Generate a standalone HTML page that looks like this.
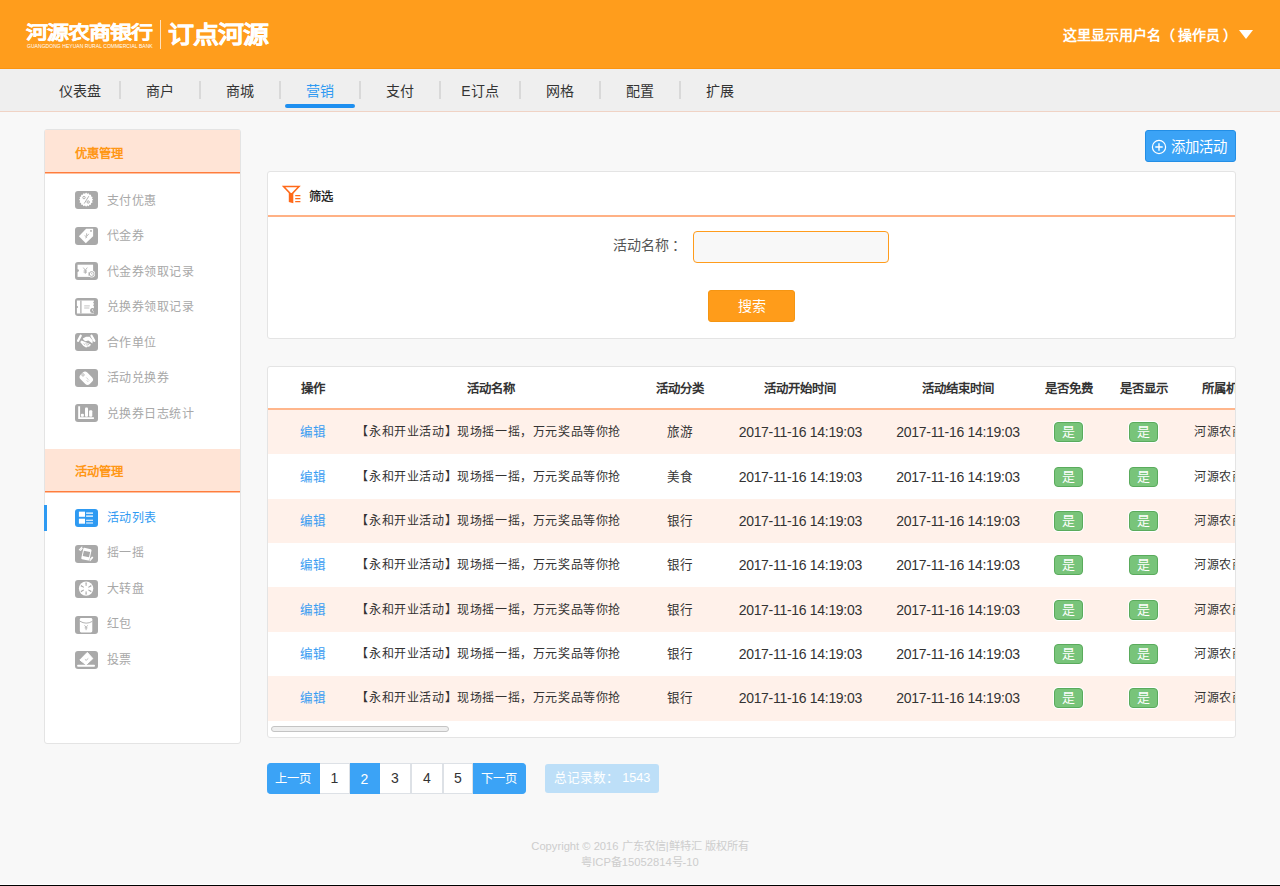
<!DOCTYPE html>
<html lang="zh-CN"><head><meta charset="utf-8">
<style>
*{margin:0;padding:0;box-sizing:border-box}
html,body{width:1280px;height:886px;overflow:hidden}
body{position:relative;background:#f8f8f8;font-family:"Liberation Sans",sans-serif;color:#333;font-size:13px}
.abs{position:absolute}
#hdr{left:0;top:0;width:1280px;height:69px;background:#ff9d1c;border-bottom:1px solid #fb9410}
.logo1{left:26px;top:20px;font-size:22px;font-weight:900;color:#fff;letter-spacing:-1px;white-space:nowrap;line-height:30px;transform:scale(1,0.85);transform-origin:0 0;-webkit-text-stroke:0.4px #fff}
.logo-sub{left:27px;top:43px;font-size:5px;color:#fff;white-space:nowrap;letter-spacing:0.05px;line-height:6px}
.logo-div{left:160px;top:20px;width:1px;height:29px;background:#ffe2bd}
.logo2{left:168px;top:19px;font-size:26px;font-weight:900;color:#fff;white-space:nowrap;line-height:34px;letter-spacing:-1px;transform:scale(1,0.915);transform-origin:0 0;-webkit-text-stroke:0.4px #fff}
.user{left:1063px;top:25px;font-size:14px;font-weight:bold;color:#fff;white-space:nowrap;line-height:20px}
.tri{left:1239px;top:30px;width:0;height:0;border-left:7.5px solid transparent;border-right:7.5px solid transparent;border-top:9px solid #fff}
#nav{left:0;top:69px;width:1280px;height:43px;background:#efefef;border-bottom:1px solid #f0d3c5}
.ni{top:1px;width:80px;height:42px;line-height:42px;text-align:center;font-size:14px;color:#333}
.ns{top:12px;width:2px;height:18px;background:#d9d9d9}
.nact{color:#2e9af2}
.nbar{left:285px;top:35px;width:70px;height:4px;border-radius:2px;background:#1e8ff0}

.panel{background:#fff;border:1px solid #e4e4e4;border-radius:3px}
#side{left:44px;top:129px;width:197px;height:615px}
.sh{left:45px;width:195px;height:44px;background:#ffe4d6;border-bottom:1px solid #ffc0a0;box-shadow:inset 0 -1px 0 #ff7d3c}
.sht{left:75px;font-size:12.3px;font-weight:bold;color:#ff9716;line-height:20px;white-space:nowrap}
.si{left:75px;width:23px;height:18px;border-radius:3px;background:#a9a9a9}
.sit{left:107px;font-size:12px;letter-spacing:0.45px;color:#a8a8a8;line-height:20px;white-space:nowrap}
.si svg{position:absolute;left:0;top:0}

#filter{left:267px;top:171px;width:969px;height:168px}
.fline{left:268px;top:215px;width:967px;height:2px;background:#ffb185}
.ftitle{left:309px;top:187px;font-size:12.3px;color:#111;line-height:20px;font-weight:normal;-webkit-text-stroke:0.25px #111}
.flab{left:613px;top:235px;font-size:14px;color:#555;line-height:20px;white-space:nowrap}
.finp{left:693px;top:231px;width:196px;height:32px;border:1px solid #ff9c1c;border-radius:4px;background:#f8f8f8}
.fbtn{left:708px;top:290px;width:87px;height:32px;border-radius:3px;background:#ff9c1a;border:1px solid #f59512;color:#fff;font-size:14px;line-height:30px;text-align:center}
.addbtn{left:1145px;top:130px;width:91px;height:32px;border-radius:3px;background:#3ba3f6;border:1px solid #238ee5;color:#fff;font-size:14.4px;line-height:30px;white-space:nowrap}

#tbl{left:267px;top:366px;width:969px;height:372px;overflow:hidden}
.th{font-size:12.4px;font-weight:bold;color:#333;line-height:20px;white-space:nowrap;text-align:center;width:300px}
.hline{left:268px;top:408px;width:967px;height:2px;background:#ffb68c}
.row{left:268px;width:967px;height:44.4px}
.odd{background:#fff1ea}
.dt{font-size:14px;letter-spacing:-0.3px}
.td{font-size:12.55px;color:#333;line-height:20px;white-space:nowrap;text-align:center;width:300px}
.edit{color:#3a9df2}
.badge{width:29px;height:20px;border-radius:4px;background:#78c47a;border:1px solid #5aab5c;color:#fff;font-size:13px;line-height:18px;text-align:center;box-shadow:0 0 0 1px #fff}
.clip{left:268px;top:366px;width:967px;height:370px;overflow:hidden}
.sbar{left:271px;top:726px;width:178px;height:5px;border-radius:3px;background:#ececec;border:1px solid #c8c8c8}

.pg{top:763px;height:31px;line-height:28px;text-align:center;font-size:14px;color:#333;background:#fff;border:1px solid #dde1e6;border-left:none}
.pgb{background:#3ba3f6;color:#fff;border-color:#3ba3f6;font-size:12.3px;line-height:31px}
.total{left:545px;top:764px;width:114px;height:29px;border-radius:3px;background:#bddff8;color:#fff;font-size:12.7px;line-height:29px;text-align:center;white-space:nowrap}
.foot{left:340px;width:600px;text-align:center;font-size:11.2px;color:#cdcdcd;line-height:16px;white-space:nowrap}
.bline1{left:0;top:884px;width:1280px;height:1px;background:#fff}
.bline2{left:0;top:885px;width:1280px;height:1px;background:#000}
</style></head><body>
<div id="hdr" class="abs"></div>
<div class="abs logo1">河源农商银行</div>
<div class="abs logo-sub">GUANGDONG HEYUAN RURAL COMMERCIAL BANK</div>
<div class="abs logo-div"></div>
<div class="abs logo2">订点河源</div>
<div class="abs user">这里显示用户名<span style="margin-right:3px">（</span>操作员<span style="margin-left:3px">）</span></div>
<div class="abs tri"></div>

<div id="nav" class="abs">
  <div class="abs ni" style="left:40px">仪表盘</div><div class="abs ns" style="left:119px"></div>
  <div class="abs ni" style="left:120px">商户</div><div class="abs ns" style="left:199px"></div>
  <div class="abs ni" style="left:200px">商城</div><div class="abs ns" style="left:279px"></div>
  <div class="abs ni nact" style="left:280px">营销</div><div class="abs ns" style="left:359px"></div>
  <div class="abs ni" style="left:360px">支付</div><div class="abs ns" style="left:439px"></div>
  <div class="abs ni" style="left:440px">E订点</div><div class="abs ns" style="left:519px"></div>
  <div class="abs ni" style="left:520px">网格</div><div class="abs ns" style="left:599px"></div>
  <div class="abs ni" style="left:600px">配置</div><div class="abs ns" style="left:679px"></div>
  <div class="abs ni" style="left:680px">扩展</div>
  <div class="abs nbar"></div>
</div>

<!-- sidebar -->
<div id="side" class="abs panel"></div>
<div class="abs sh" style="top:130px"></div>
<div class="abs sht" style="top:143.5px">优惠管理</div>
<div class="abs sh" style="top:449px"></div>
<div class="abs sht" style="top:462px">活动管理</div>

<div class="abs si" style="top:191.00px"><svg width="23" height="18" viewBox="0 0 23 18"><path d="M11.1 1.6l1.15 1.2 1.55-.65.6 1.55 1.65.05.05 1.65 1.55.6-.65 1.55 1.2 1.15-1.2 1.15.65 1.55-1.55.6-.05 1.65-1.65.05-.6 1.55-1.55-.65-1.15 1.2-1.15-1.2-1.55.65-.6-1.55-1.65-.05-.05-1.65-1.55-.6.65-1.55-1.2-1.15 1.2-1.15-.65-1.55 1.55-.6.05-1.65 1.65-.05.6-1.55 1.55.65z" fill="#fff"/><circle cx="9" cy="6.6" r="1.2" fill="none" stroke="#a9a9a9" stroke-width=".9"/><circle cx="13.2" cy="11" r="1.2" fill="none" stroke="#a9a9a9" stroke-width=".9"/><path d="M13.8 5.2l-4.6 7.4" stroke="#a9a9a9" stroke-width=".9"/></svg></div><div class="abs sit" style="top:190.60px">支付优惠</div>
<div class="abs si" style="top:226.55px"><svg width="23" height="18" viewBox="0 0 23 18"><path d="M3.9 9.2L11.1 1.65H18.1V9.2L10.8 16.3z" fill="#fff"/><circle cx="16" cy="3.9" r="0.9" fill="#a9a9a9"/><path d="M11.6 6.3v2.6M9.6 8.7l2.3 1.2M13.8 6.9l-1.9 2.2M10.3 11l1.8-1" stroke="#a9a9a9" stroke-width=".8"/></svg></div><div class="abs sit" style="top:226.15px">代金券</div>
<div class="abs si" style="top:262.10px"><svg width="23" height="18" viewBox="0 0 23 18"><path d="M2.55 2.7H18.1V14.9H2.55z" fill="#fff"/><circle cx="2.6" cy="8.6" r="1.3" fill="#a9a9a9"/><path d="M8.3 5.6l2 2.6 2-2.6M10.3 8.2v3.6M8.6 8.9h3.4M8.6 10.2h3.4" stroke="#a9a9a9" stroke-width=".8" fill="none"/><circle cx="16.7" cy="12" r="3.4" fill="#fff"/><circle cx="16.7" cy="12" r="2.4" fill="none" stroke="#a9a9a9" stroke-width=".9"/><path d="M16.7 10.8v1.3l.9.8M13.9 10.2v3.6" stroke="#a9a9a9" stroke-width=".7" fill="none"/></svg></div><div class="abs sit" style="top:261.70px">代金券领取记录</div>
<div class="abs si" style="top:297.65px"><svg width="23" height="18" viewBox="0 0 23 18"><path d="M1.9 2.5H18.9V15.5H1.9z" fill="#fff"/><circle cx="2" cy="9" r="1.1" fill="#a9a9a9"/><path d="M5.9 2.5V15.5" stroke="#a9a9a9" stroke-width="1.2"/><path d="M9.2 7.9h5.6M9.2 10h5.2" stroke="#a9a9a9" stroke-width=".7"/><circle cx="19" cy="4.6" r=".8" fill="#a9a9a9"/><circle cx="19" cy="7.3" r=".8" fill="#a9a9a9"/><circle cx="17.6" cy="12.6" r="2.5" fill="#a9a9a9"/><path d="M17.6 11.2v1.5l1 .8" stroke="#fff" stroke-width=".7" fill="none"/></svg></div><div class="abs sit" style="top:297.25px">兑换券领取记录</div>
<div class="abs si" style="top:333.20px"><svg width="23" height="18" viewBox="0 0 23 18"><path d="M5.7 2.8L3.1 7.7M16.5 2.8L19.3 7.7" stroke="#fff" stroke-width="2.3" stroke-linecap="round"/><path d="M7.8 5.4L11 3.7 14.6 3.8 17.8 7.4 17.4 10.4 13.4 7.4 10.4 8.2 8.6 7z" fill="#fff"/><path d="M5.2 8.9L6.6 7.4 16 11.4 14.8 13.2 11 14.4 8.2 12.8z" fill="#fff"/><path d="M8.6 10.6l1.6 1.2M10.4 10.2l2 1.4M12.4 10.8l1.8 1.2M11.6 12.4l1.2.8" stroke="#a9a9a9" stroke-width=".7"/></svg></div><div class="abs sit" style="top:332.80px">合作单位</div>
<div class="abs si" style="top:368.75px"><svg width="23" height="18" viewBox="0 0 23 18"><rect x="6.55" y="2.7" width="9.5" height="13" rx="3.2" fill="#fff" transform="rotate(-45 11.3 9.2)"/><circle cx="8" cy="5.9" r="1.2" fill="none" stroke="#a9a9a9" stroke-width=".8"/><path d="M11.4 8.6l1.2 1.2M13 10.4l1 1M11.8 11.4l1.4 1.4" stroke="#a9a9a9" stroke-width=".7"/></svg></div><div class="abs sit" style="top:368.35px">活动兑换券</div>
<div class="abs si" style="top:404.30px"><svg width="23" height="18" viewBox="0 0 23 18"><path d="M3.2 2.3h1.9v11h13.8v1.6H3.2z" fill="#fff"/><rect x="5.9" y="9.8" width="3" height="3" rx="1" fill="#fff"/><rect x="10" y="3.5" width="3" height="9.3" rx="1" fill="#fff"/><rect x="14.1" y="6.3" width="3.2" height="6.5" rx="1" fill="#fff"/></svg></div><div class="abs sit" style="top:403.90px">兑换券日志统计</div>
<div class="abs" style="left:44px;top:505.0px;width:3px;height:26px;background:#2e9af2"></div>
<div class="abs si" style="top:509.00px;background:#2e9af2"><svg width="23" height="18" viewBox="0 0 23 18"><rect x="3.9" y="2.65" width="6.1" height="5.15" fill="#fff"/><rect x="3.9" y="9.7" width="6.1" height="5" fill="#fff"/><path d="M11.1 4.1H18M11.1 7.1H18M11.1 11.2H18M11.1 14H18" stroke="#fff" stroke-width="1.1"/></svg></div><div class="abs sit" style="top:507.60px;color:#2e9af2">活动列表</div>
<div class="abs si" style="top:544.55px"><svg width="23" height="18" viewBox="0 0 23 18"><g transform="rotate(12 11.4 9.2)"><rect x="7.2" y="3.4" width="8.4" height="11.6" rx="1" fill="#fff"/><rect x="8.2" y="6.3" width="6.4" height="5.4" fill="#a9a9a9"/></g><path d="M4.3 4.9l2.6-2.9M5.6 5.3l1.6-1.9M15 15.6l2.7-2.9M15.6 13.8l1.6-1.7" stroke="#fff" stroke-width="1.1" stroke-linecap="round"/></svg></div><div class="abs sit" style="top:543.15px">摇一摇</div>
<div class="abs si" style="top:580.10px"><svg width="23" height="18" viewBox="0 0 23 18"><circle cx="11.1" cy="8.6" r="7.2" fill="#fff"/><g fill="#a9a9a9"><path d="M10.4 2.6h1.4l-.3 3.4h-.8z"/><path d="M10.4 2.6h1.4l-.3 3.4h-.8z" transform="rotate(60 11.1 8.6)"/><path d="M10.4 2.6h1.4l-.3 3.4h-.8z" transform="rotate(120 11.1 8.6)"/><path d="M10.4 2.6h1.4l-.3 3.4h-.8z" transform="rotate(180 11.1 8.6)"/><path d="M10.4 2.6h1.4l-.3 3.4h-.8z" transform="rotate(240 11.1 8.6)"/><path d="M10.4 2.6h1.4l-.3 3.4h-.8z" transform="rotate(300 11.1 8.6)"/></g></svg></div><div class="abs sit" style="top:578.70px">大转盘</div>
<div class="abs si" style="top:615.65px"><svg width="23" height="18" viewBox="0 0 23 18"><rect x="4.85" y="1.9" width="12.45" height="14.6" rx="1.4" fill="#fff"/><path d="M4.9 5.2q6.2 3.8 12.4 .2" stroke="#a9a9a9" stroke-width=".9" fill="none"/><path d="M9.5 9.3l1.6 2 1.6-2M11.1 11.3v2.9M9.7 11.9h2.8" stroke="#a9a9a9" stroke-width=".8" fill="none"/></svg></div><div class="abs sit" style="top:614.25px">红包</div>
<div class="abs si" style="top:651.20px"><svg width="23" height="18" viewBox="0 0 23 18"><path d="M12.3 1.4L17.85 7.6 11.1 13.8 4.85 9z" fill="#fff" stroke="#fff" stroke-width="1" stroke-linejoin="round"/><path d="M9.9 8.3l1.2 1.1 2.2-2" stroke="#a9a9a9" stroke-width=".8" fill="none"/><rect x="2.1" y="13.8" width="17.9" height="1.9" rx=".9" fill="#fff"/></svg></div><div class="abs sit" style="top:649.80px">投票</div>

<!-- filter -->
<div class="abs addbtn"><svg class="abs" style="left:5px;top:8px" width="16" height="16" viewBox="0 0 16 16"><circle cx="8" cy="8" r="6.6" fill="none" stroke="#fff" stroke-width="1.2"/><path d="M8 4.3v7.4M4.3 8h7.4" stroke="#fff" stroke-width="1.4"/></svg><span class="abs" style="left:25px;top:1px">添加活动</span></div>
<div id="filter" class="abs panel"></div>
<div class="abs fline"></div>
<svg class="abs" style="left:282px;top:185px" width="20" height="20" viewBox="0 0 20 20"><path d="M1.6 1.5H17L9.3 9.6z" fill="none" stroke="#ff6a1a" stroke-width="1.5" stroke-linejoin="miter"/><path d="M6.8 8h4.5v10.2l-4.5-1.3z" fill="#ff6a1a"/><path d="M13.2 10.6h5.2M13.2 13.6h5.2M13.2 16.6h5.2" stroke="#ff6a1a" stroke-width="1.1"/></svg>
<div class="abs ftitle">筛选</div>
<div class="abs flab">活动名称<span class="abs" style="left:59px;top:0">：</span></div>
<div class="abs finp"></div>
<div class="abs fbtn">搜索</div>

<!-- table -->
<div id="tbl" class="abs panel"></div>
<div class="abs clip" id="clip"><div class="abs th" style="left:-105.2px;top:12.5px">操作</div>
<div class="abs th" style="left:73.0px;top:12.5px">活动名称</div>
<div class="abs th" style="left:261.5px;top:12.5px">活动分类</div>
<div class="abs th" style="left:382.3px;top:12.5px">活动开始时间</div>
<div class="abs th" style="left:540.0px;top:12.5px">活动结束时间</div>
<div class="abs th" style="left:651.3px;top:12.5px">是否免费</div>
<div class="abs th" style="left:725.5px;top:12.5px">是否显示</div>
<div class="abs th" style="left:933.5px;top:12.5px;text-align:left;width:80px">所属机构</div>
<div class="abs" style="left:0;top:42px;width:967px;height:2px;background:#ffb68c"></div>
<div class="abs odd" style="left:0;top:44.00px;width:967px;height:44.37px"></div>
<div class="abs td" style="left:-105.2px;top:56.19px"><span class="edit">编辑</span></div>
<div class="abs td" style="left:70.7px;top:56.19px"><span style="font-size:12px;letter-spacing:0.6px">【永和开业活动】现场摇一摇，万元奖品等你抢</span></div>
<div class="abs td" style="left:261.5px;top:56.19px">旅游</div>
<div class="abs td" style="left:382.3px;top:56.19px"><span class="dt">2017-11-16 14:19:03</span></div>
<div class="abs td" style="left:540.0px;top:56.19px"><span class="dt">2017-11-16 14:19:03</span></div>
<div class="abs badge" style="left:785.8px;top:56.19px">是</div>
<div class="abs badge" style="left:861.0px;top:56.19px">是</div>
<div class="abs td" style="left:926px;top:56.19px;text-align:left;width:120px;font-size:12px;letter-spacing:0.5px">河源农商银行</div>
<div class="abs " style="left:0;top:88.37px;width:967px;height:44.37px"></div>
<div class="abs td" style="left:-105.2px;top:100.56px"><span class="edit">编辑</span></div>
<div class="abs td" style="left:70.7px;top:100.56px"><span style="font-size:12px;letter-spacing:0.6px">【永和开业活动】现场摇一摇，万元奖品等你抢</span></div>
<div class="abs td" style="left:261.5px;top:100.56px">美食</div>
<div class="abs td" style="left:382.3px;top:100.56px"><span class="dt">2017-11-16 14:19:03</span></div>
<div class="abs td" style="left:540.0px;top:100.56px"><span class="dt">2017-11-16 14:19:03</span></div>
<div class="abs badge" style="left:785.8px;top:100.56px">是</div>
<div class="abs badge" style="left:861.0px;top:100.56px">是</div>
<div class="abs td" style="left:926px;top:100.56px;text-align:left;width:120px;font-size:12px;letter-spacing:0.5px">河源农商银行</div>
<div class="abs odd" style="left:0;top:132.74px;width:967px;height:44.37px"></div>
<div class="abs td" style="left:-105.2px;top:144.92px"><span class="edit">编辑</span></div>
<div class="abs td" style="left:70.7px;top:144.92px"><span style="font-size:12px;letter-spacing:0.6px">【永和开业活动】现场摇一摇，万元奖品等你抢</span></div>
<div class="abs td" style="left:261.5px;top:144.92px">银行</div>
<div class="abs td" style="left:382.3px;top:144.92px"><span class="dt">2017-11-16 14:19:03</span></div>
<div class="abs td" style="left:540.0px;top:144.92px"><span class="dt">2017-11-16 14:19:03</span></div>
<div class="abs badge" style="left:785.8px;top:144.92px">是</div>
<div class="abs badge" style="left:861.0px;top:144.92px">是</div>
<div class="abs td" style="left:926px;top:144.92px;text-align:left;width:120px;font-size:12px;letter-spacing:0.5px">河源农商银行</div>
<div class="abs " style="left:0;top:177.11px;width:967px;height:44.37px"></div>
<div class="abs td" style="left:-105.2px;top:189.29px"><span class="edit">编辑</span></div>
<div class="abs td" style="left:70.7px;top:189.29px"><span style="font-size:12px;letter-spacing:0.6px">【永和开业活动】现场摇一摇，万元奖品等你抢</span></div>
<div class="abs td" style="left:261.5px;top:189.29px">银行</div>
<div class="abs td" style="left:382.3px;top:189.29px"><span class="dt">2017-11-16 14:19:03</span></div>
<div class="abs td" style="left:540.0px;top:189.29px"><span class="dt">2017-11-16 14:19:03</span></div>
<div class="abs badge" style="left:785.8px;top:189.29px">是</div>
<div class="abs badge" style="left:861.0px;top:189.29px">是</div>
<div class="abs td" style="left:926px;top:189.29px;text-align:left;width:120px;font-size:12px;letter-spacing:0.5px">河源农商银行</div>
<div class="abs odd" style="left:0;top:221.48px;width:967px;height:44.37px"></div>
<div class="abs td" style="left:-105.2px;top:233.66px"><span class="edit">编辑</span></div>
<div class="abs td" style="left:70.7px;top:233.66px"><span style="font-size:12px;letter-spacing:0.6px">【永和开业活动】现场摇一摇，万元奖品等你抢</span></div>
<div class="abs td" style="left:261.5px;top:233.66px">银行</div>
<div class="abs td" style="left:382.3px;top:233.66px"><span class="dt">2017-11-16 14:19:03</span></div>
<div class="abs td" style="left:540.0px;top:233.66px"><span class="dt">2017-11-16 14:19:03</span></div>
<div class="abs badge" style="left:785.8px;top:233.66px">是</div>
<div class="abs badge" style="left:861.0px;top:233.66px">是</div>
<div class="abs td" style="left:926px;top:233.66px;text-align:left;width:120px;font-size:12px;letter-spacing:0.5px">河源农商银行</div>
<div class="abs " style="left:0;top:265.85px;width:967px;height:44.37px"></div>
<div class="abs td" style="left:-105.2px;top:278.03px"><span class="edit">编辑</span></div>
<div class="abs td" style="left:70.7px;top:278.03px"><span style="font-size:12px;letter-spacing:0.6px">【永和开业活动】现场摇一摇，万元奖品等你抢</span></div>
<div class="abs td" style="left:261.5px;top:278.03px">银行</div>
<div class="abs td" style="left:382.3px;top:278.03px"><span class="dt">2017-11-16 14:19:03</span></div>
<div class="abs td" style="left:540.0px;top:278.03px"><span class="dt">2017-11-16 14:19:03</span></div>
<div class="abs badge" style="left:785.8px;top:278.03px">是</div>
<div class="abs badge" style="left:861.0px;top:278.03px">是</div>
<div class="abs td" style="left:926px;top:278.03px;text-align:left;width:120px;font-size:12px;letter-spacing:0.5px">河源农商银行</div>
<div class="abs odd" style="left:0;top:310.22px;width:967px;height:44.37px"></div>
<div class="abs td" style="left:-105.2px;top:322.40px"><span class="edit">编辑</span></div>
<div class="abs td" style="left:70.7px;top:322.40px"><span style="font-size:12px;letter-spacing:0.6px">【永和开业活动】现场摇一摇，万元奖品等你抢</span></div>
<div class="abs td" style="left:261.5px;top:322.40px">银行</div>
<div class="abs td" style="left:382.3px;top:322.40px"><span class="dt">2017-11-16 14:19:03</span></div>
<div class="abs td" style="left:540.0px;top:322.40px"><span class="dt">2017-11-16 14:19:03</span></div>
<div class="abs badge" style="left:785.8px;top:322.40px">是</div>
<div class="abs badge" style="left:861.0px;top:322.40px">是</div>
<div class="abs td" style="left:926px;top:322.40px;text-align:left;width:120px;font-size:12px;letter-spacing:0.5px">河源农商银行</div>
<div class="abs" style="left:3px;top:360px;width:178px;height:5.5px;border-radius:3px;background:#eeeeee;border:1px solid #c4c4c4"></div></div>

<!-- pagination -->
<div class="abs pg pgb" style="left:267px;width:53px;border-radius:4px 0 0 4px">上一页</div>
<div class="abs pg" style="left:320px;width:30px">1</div>
<div class="abs pg pgb" style="left:350px;width:30px;font-size:14px">2</div>
<div class="abs pg" style="left:380px;width:31px">3</div>
<div class="abs pg" style="left:411px;width:32px;border-left:1px solid #dde1e6">4</div>
<div class="abs pg" style="left:443px;width:30px;border-left:1px solid #dde1e6">5</div>
<div class="abs pg pgb" style="left:473px;width:53px;border-radius:0 4px 4px 0">下一页</div>
<div class="abs total">总记录数：&nbsp;1543</div>

<div class="abs foot" style="top:838px">Copyright © 2016 广东农信|鲜特汇 版权所有</div>
<div class="abs foot" style="top:854px">粤ICP备15052814号-10</div>
<div class="abs bline1"></div>
<div class="abs bline2"></div>
</body></html>
